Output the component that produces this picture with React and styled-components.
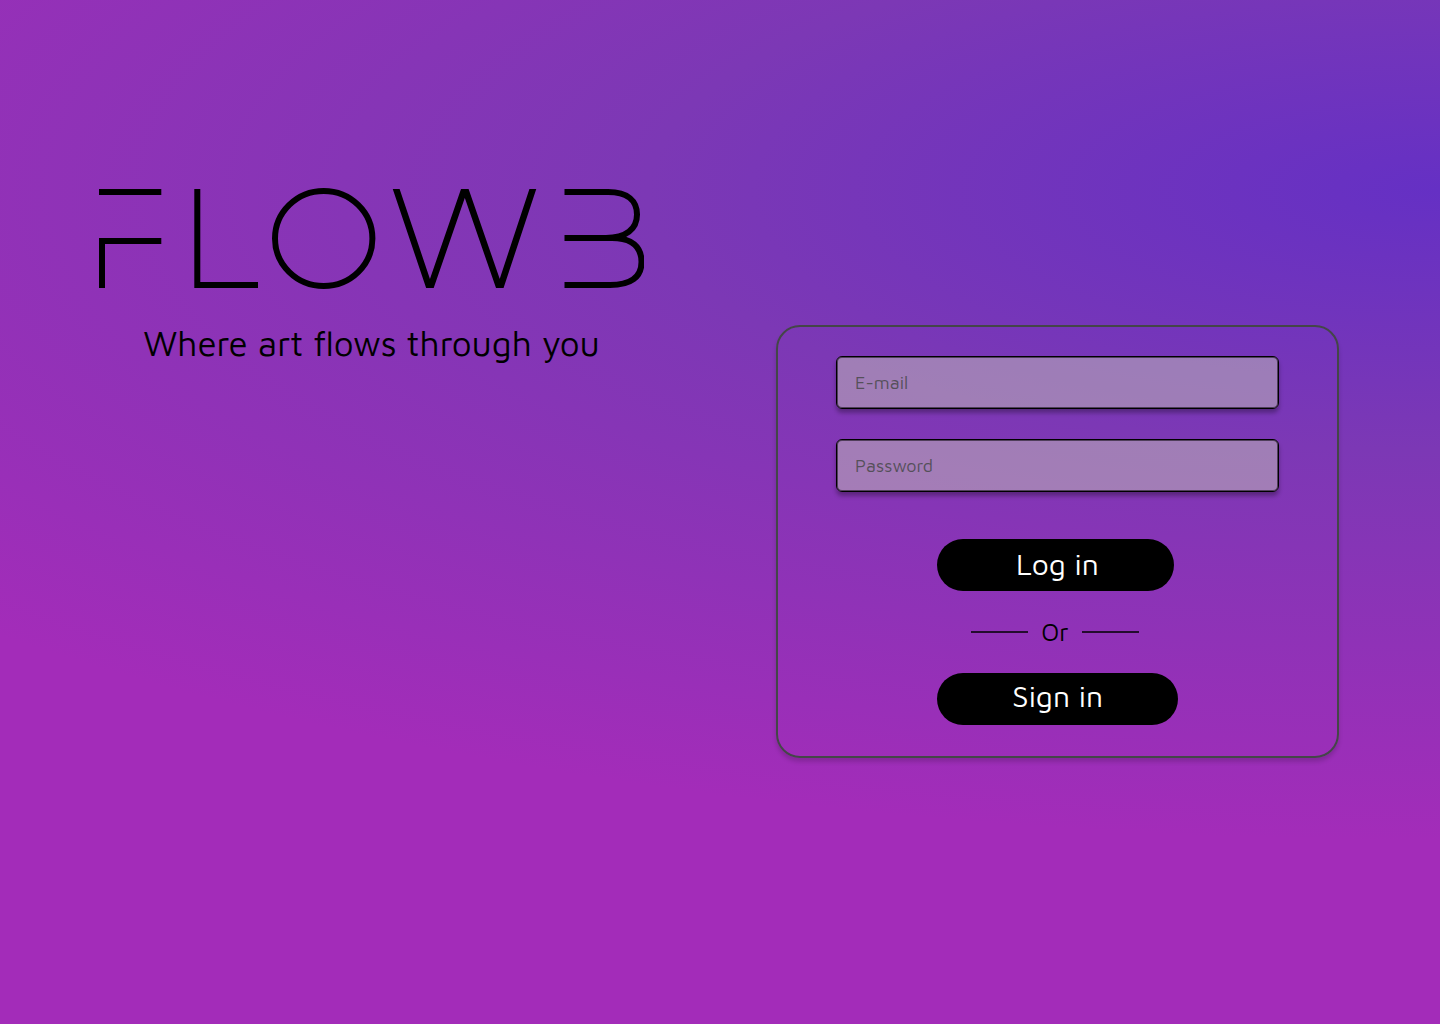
import React from "react";
import styled, { createGlobalStyle } from "styled-components";

const GlobalStyle = createGlobalStyle`
  *, *::before, *::after { box-sizing: border-box; }
  body {
    margin: 0;
    font-family: "Maven Pro", "Noto Sans", sans-serif;
    color: #000;
  }
`;

const Page = styled.main`
  min-height: 100vh;
  display: flex;
  flex-wrap: wrap;
  justify-content: space-between;
  align-items: flex-start;
  gap: 40px;
  padding: 188px 101px 64px 99px;
  background: radial-gradient(
    ellipse 1980px 650px at 100% 190px,
    #6530c4 0%,
    #7c38b5 40%,
    #a32cb9 100%
  );
`;

const Brand = styled.header`
  display: flex;
  flex-direction: column;
  align-items: center;
  gap: 30px;
`;

const Title = styled.h1`
  margin: 0;
  line-height: 0;
`;

const Logo = styled.svg`
  display: block;
  width: 545px;
  height: 101px;
`;

const Tagline = styled.p`
  margin: 0;
  font-size: 35px;
  font-weight: 300;
  line-height: 48px;
`;

const Card = styled.form`
  width: 563px;
  margin-top: 137px;
  padding: 29px 58px 31px;
  display: flex;
  flex-direction: column;
  gap: 30px;
  border: 2px solid #444648;
  border-radius: 24px;
  box-shadow: 0 4px 4px rgba(0, 0, 0, 0.16);
`;

const Field = styled.input`
  width: 100%;
  height: 53px;
  padding: 0 18px;
  border: 1px solid #000;
  border-radius: 6px;
  background: rgba(196, 196, 184, 0.5);
  box-shadow: inset 0 0 0 1px rgba(0, 0, 0, 0.5), 0 4px 4px rgba(0, 0, 0, 0.3);
  font-family: inherit;
  font-size: 18px;
  font-weight: 300;
  color: #000;

  &::placeholder {
    color: #55505a;
    opacity: 1;
  }
`;

const Actions = styled.div`
  align-self: center;
  width: 241px;
  margin-top: 17px;
  display: flex;
  flex-direction: column;
`;

const PillButton = styled.button`
  width: ${({ $width }) => $width};
  height: 52px;
  padding: ${({ $padding }) => $padding};
  border: 0;
  border-radius: 26px;
  background: #000;
  color: #fff;
  font-family: inherit;
  font-size: 30px;
  font-weight: 300;
  line-height: 36px;
  cursor: pointer;
`;

const Divider = styled.div`
  width: 236px;
  height: 82px;
  padding: 0 34px;
  display: flex;
  align-items: center;
  justify-content: space-between;
  font-size: 25px;
  font-weight: 300;
  line-height: 32px;

  &::before,
  &::after {
    content: "";
    width: 57px;
    height: 2px;
    background: rgba(0, 0, 0, 0.75);
  }
`;

export default function App() {
  return (
    <>
      <GlobalStyle />
      <Page>
        <Brand>
          <Title>
            <Logo viewBox="99 188 545 101" role="img" aria-label="FLOWB">
              <clipPath id="strip">
                <rect x="380" y="189" width="170" height="99" />
              </clipPath>
              <g fill="none" stroke="#000" strokeWidth="6">
                <path d="M99 192H161.300M161.300 241H102V288" />
                <path d="M197.300 189V285H258" />
                <ellipse cx="323.700" cy="238.500" rx="48.700" ry="47.500" />
                <polyline
                  clipPath="url(#strip)"
                  strokeWidth="6.500"
                  strokeMiterlimit="10"
                  points="395.500,187 429.900,289 464.800,188 499.800,289 533.500,187"
                />
                <path d="M564.500 192H608C628 192 637 201 637 214.500C637 229 626 238 606 238H564.500" />
                <path d="M606 238H612C632 238 641.500 247 641.500 262C641.500 277 631 285 610 285H564.500" />
              </g>
            </Logo>
          </Title>
          <Tagline>Where art flows through you</Tagline>
        </Brand>
        <Card onSubmit={(event) => event.preventDefault()}>
          <Field type="email" placeholder="E-mail" aria-label="E-mail" />
          <Field type="password" placeholder="Password" aria-label="Password" />
          <Actions>
            <PillButton type="submit" $width="237px" $padding="0 0 2px 4px">Log in</PillButton>
            <Divider>Or</Divider>
            <PillButton type="button" $width="241px" $padding="0 0 6px">Sign in</PillButton>
          </Actions>
        </Card>
      </Page>
    </>
  );
}
